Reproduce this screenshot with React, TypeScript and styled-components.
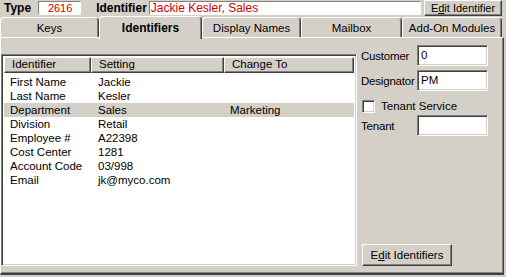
import React from "react";
import styled, { createGlobalStyle, css } from "styled-components";

const GlobalStyle = createGlobalStyle`
  html, body { margin: 0; padding: 0; background: #d4d0c8; overflow: hidden; }
  body { font-family: "Liberation Sans", Arial, sans-serif; font-size: 11px; color: #000; }
`;

const grey = "#d4d0c8";
const dark = "#808080";
const darker = "#404040";

const raised = css`
  border-top: 1px solid #fff;
  border-left: 1px solid #fff;
  border-right: 1px solid ${darker};
  border-bottom: 1px solid ${darker};
  box-shadow: inset -1px -1px 0 ${dark};
`;

const sunken = css`
  border-top: 1px solid ${dark};
  border-left: 1px solid ${dark};
  border-right: 1px solid #fff;
  border-bottom: 1px solid #fff;
  box-shadow: inset 1px 1px 0 ${darker}, inset -1px -1px 0 ${grey};
`;

const Window = styled.div`
  width: 506px;
  height: 277px;
  display: flex;
  flex-direction: column;
  background: ${grey};
`;

const TopBar = styled.div`
  height: 16px;
  display: flex;
  align-items: center;
  padding-left: 4px;
  padding-right: 4px;
`;

const TopLabel = styled.span<{ $gap?: number }>`
  font-weight: bold;
  font-size: 12px;
  margin-left: ${(p) => p.$gap ?? 0}px;
  margin-right: 2px;
  line-height: 14px;
`;

const ValueBox = styled.div<{ $width?: number; $center?: boolean }>`
  box-sizing: border-box;
  height: 14px;
  margin-top: -1px;
  ${(p) => (p.$width ? `width: ${p.$width}px;` : "flex: 1;")}
  background: #fff;
  border-top: 1px solid ${dark};
  border-left: 1px solid ${dark};
  border-right: 1px solid #fff;
  border-bottom: 1px solid #fff;
  color: #d00000;
  font-size: ${(p) => (p.$center ? 11 : 12)}px;
  line-height: 12px;
  padding-left: 1px;
  text-align: ${(p) => (p.$center ? "center" : "left")};
  white-space: nowrap;
  overflow: hidden;
  margin-left: ${(p) => (p.$center ? 5 : 0)}px;
`;

const Button = styled.button<{ $width: number; $height: number }>`
  box-sizing: border-box;
  width: ${(p) => p.$width}px;
  height: ${(p) => p.$height}px;
  background: ${grey};
  ${raised}
  font-family: "Liberation Sans", Arial, sans-serif;
  font-size: 11px;
  color: #000;
  padding: 0;
  margin: 0;
  display: flex;
  align-items: center;
  justify-content: center;
  flex-shrink: 0;
`;

const TopButton = styled(Button)`
  margin-left: 3px;
  align-self: flex-start;
`;

const Mnemonic = styled.span`
  text-decoration: underline;
`;

const TabRow = styled.div`
  height: 21px;
  display: flex;
  align-items: flex-end;
  position: relative;
  z-index: 1;
`;

const Tab = styled.div<{ $width: number; $active?: boolean }>`
  box-sizing: border-box;
  width: ${(p) => p.$width}px;
  height: ${(p) => (p.$active ? 23 : 20)}px;
  margin-bottom: ${(p) => (p.$active ? -2 : 0)}px;
  background: ${grey};
  border-top: 1px solid #fff;
  border-left: 1px solid #fff;
  border-right: 1px solid ${darker};
  border-radius: 4px 4px 0 0;
  box-shadow: inset -1px 0 0 ${dark};
  display: flex;
  align-items: ${(p) => (p.$active ? "flex-start" : "center")};
  padding-top: ${(p) => (p.$active ? 4 : 0)}px;
  justify-content: center;
  font-size: ${(p) => (p.$active ? 12 : 11.5)}px;
  font-weight: ${(p) => (p.$active ? "bold" : "normal")};
  white-space: nowrap;
`;

const Panel = styled.div`
  box-sizing: border-box;
  width: 504px;
  height: 238px;
  border-top: 1px solid #fff;
  border-left: 1px solid #fff;
  border-right: 1px solid ${darker};
  border-bottom: 2px solid ${darker};
  box-shadow: inset -1px -1px 0 ${dark};
  display: flex;
  align-items: stretch;
`;

const ListBox = styled.div`
  box-sizing: border-box;
  width: 356px;
  margin-top: 16px;
  margin-bottom: 7px;
  background: #fff;
  ${sunken}
  padding: 2px;
  display: flex;
  flex-direction: column;
`;

const columns = "87px 133px 1fr";

const HeaderRow = styled.div`
  display: grid;
  grid-template-columns: ${columns};
  height: 16px;
`;

const HeaderCell = styled.div`
  box-sizing: border-box;
  background: ${grey};
  ${raised}
  padding-left: 7px;
  font-size: 11.5px;
  line-height: 13px;
  white-space: nowrap;
  overflow: hidden;
`;

const Rows = styled.div`
  padding-top: 2px;
  display: flex;
  flex-direction: column;
`;

const Row = styled.div<{ $selected?: boolean }>`
  display: grid;
  grid-template-columns: ${columns};
  height: 14px;
  line-height: 14px;
  font-size: 11.5px;
  background: ${(p) => (p.$selected ? grey : "transparent")};
`;

const Cell = styled.div<{ $pad: number }>`
  padding-left: ${(p) => p.$pad}px;
  white-space: nowrap;
  overflow: hidden;
`;

const Side = styled.div`
  margin-left: 4px;
  padding-top: 7px;
  padding-bottom: 7px;
  display: flex;
  flex-direction: column;
  width: 128px;
`;

const FieldRow = styled.div<{ $mt?: number }>`
  display: flex;
  align-items: center;
  height: 21px;
  margin-top: ${(p) => p.$mt ?? 0}px;
`;

const FieldLabel = styled.span`
  width: 56px;
  font-size: 11.5px;
  letter-spacing: -0.2px;
  white-space: nowrap;
`;

const Input = styled.div`
  box-sizing: border-box;
  width: 71px;
  height: 21px;
  background: #fff;
  ${sunken}
  padding-left: 3px;
  font-size: 11.5px;
  line-height: 19px;
`;

const CheckRow = styled.label`
  display: flex;
  align-items: center;
  height: 16px;
  margin-top: 7px;
  font-size: 11.5px;
`;

const CheckBox = styled.span`
  box-sizing: border-box;
  width: 13px;
  height: 13px;
  background: #fff;
  ${sunken}
  margin-left: 1px;
  margin-right: 6px;
`;

const EditButton = styled(Button)`
  margin-top: auto;
  margin-left: 1px;
  font-size: 11.5px;
`;

const tabs = [
  { label: "Keys", width: 99 },
  { label: "Identifiers", width: 103, active: true },
  { label: "Display Names", width: 99 },
  { label: "Mailbox", width: 101 },
  { label: "Add-On Modules", width: 100 },
];

const data = [
  ["First Name", "Jackie", ""],
  ["Last Name", "Kesler", ""],
  ["Department", "Sales", "Marketing"],
  ["Division", "Retail", ""],
  ["Employee #", "A22398", ""],
  ["Cost Center", "1281", ""],
  ["Account Code", "03/998", ""],
  ["Email", "jk@myco.com", ""],
];

export default function App() {
  return (
    <>
      <GlobalStyle />
      <Window>
        <TopBar>
          <TopLabel>Type</TopLabel>
          <ValueBox $width={43} $center>2616</ValueBox>
          <TopLabel $gap={15}>Identifier</TopLabel>
          <ValueBox>Jackie Kesler, Sales</ValueBox>
          <TopButton $width={78} $height={16}>
            E<Mnemonic>d</Mnemonic>it Identifier
          </TopButton>
        </TopBar>
        <TabRow>
          {tabs.map((t) => (
            <Tab key={t.label} $width={t.width} $active={t.active}>
              {t.label}
            </Tab>
          ))}
        </TabRow>
        <Panel>
          <ListBox>
            <HeaderRow>
              <HeaderCell>Identifier</HeaderCell>
              <HeaderCell>Setting</HeaderCell>
              <HeaderCell>Change To</HeaderCell>
            </HeaderRow>
            <Rows>
              {data.map((r) => (
                <Row key={r[0]} $selected={r[0] === "Department"}>
                  <Cell $pad={6}>{r[0]}</Cell>
                  <Cell $pad={7}>{r[1]}</Cell>
                  <Cell $pad={6}>{r[2]}</Cell>
                </Row>
              ))}
            </Rows>
          </ListBox>
          <Side>
            <FieldRow>
              <FieldLabel>Customer</FieldLabel>
              <Input>0</Input>
            </FieldRow>
            <FieldRow $mt={4}>
              <FieldLabel>Designator</FieldLabel>
              <Input>PM</Input>
            </FieldRow>
            <CheckRow>
              <CheckBox />
              Tenant Service
            </CheckRow>
            <FieldRow $mt={1}>
              <FieldLabel>Tenant</FieldLabel>
              <Input />
            </FieldRow>
            <EditButton $width={90} $height={22}>
              E<Mnemonic>d</Mnemonic>it Identifiers
            </EditButton>
          </Side>
        </Panel>
      </Window>
    </>
  );
}
